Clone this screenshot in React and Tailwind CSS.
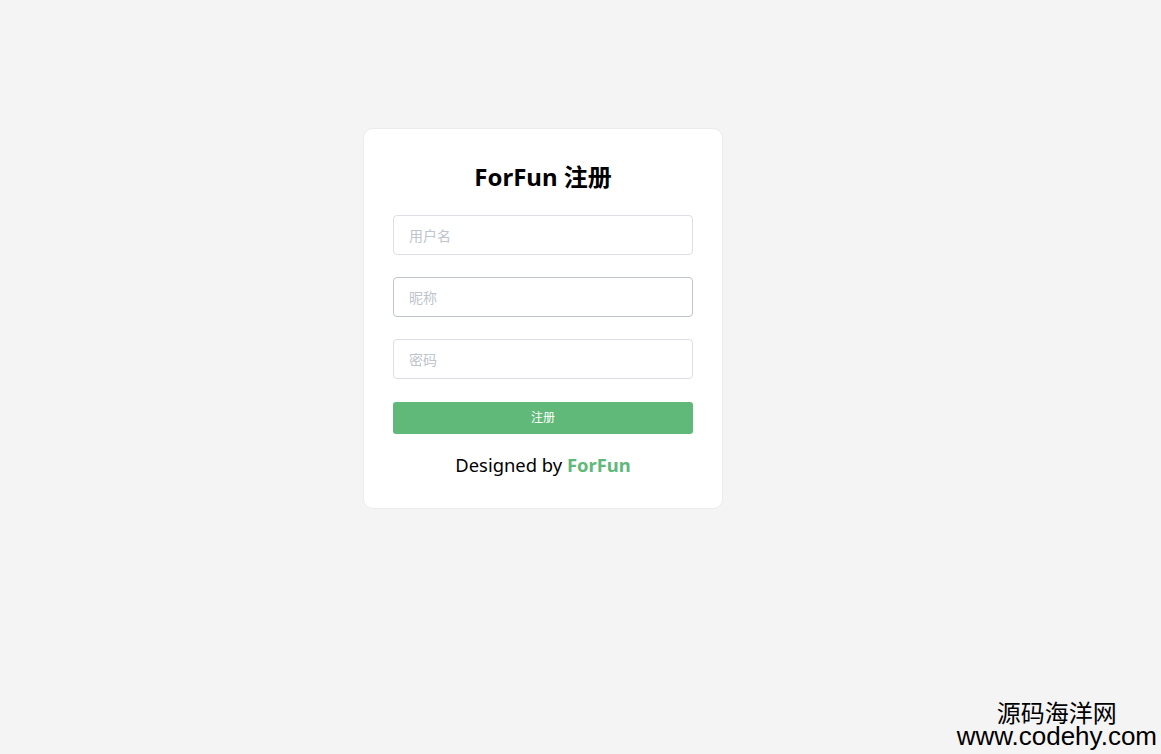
import React from 'react';

const font = { fontFamily: '"Noto Sans", "Noto Sans CJK SC", sans-serif' };

const Field = ({ placeholder, hovered }) => (
  <input
    type="text"
    placeholder={placeholder}
    className={`w-full h-10 rounded-[4px] border bg-white px-[15px] text-sm text-gray-700 outline-none placeholder:text-[#c0c4cc] ${
      hovered ? 'border-[#c0c4cc]' : 'border-[#dcdfe6]'
    }`}
  />
);

export default function App() {
  return (
    <div
      className="relative min-h-[754px] w-full bg-[#f4f4f4] pt-[128px] pl-[363px]"
      style={font}
    >
      <div className="w-[360px] rounded-[10px] border border-[#ececec] bg-white px-[29px] pt-[31px] pb-[31px]">
        <h1 className="text-center text-2xl leading-[34px] font-bold text-black mb-[21px]">
          ForFun 注册
        </h1>
        <div className="flex flex-col gap-[22px]">
          <Field placeholder="用户名" />
          <Field placeholder="昵称" hovered />
          <Field placeholder="密码" />
        </div>
        <button className="mt-[23px] h-8 w-full rounded-[3px] bg-[#60b978] text-xs text-white">
          注册
        </button>
        <p className="mt-[19px] text-center text-[18.4px] leading-6 text-black">
          Designed by <span className="font-bold text-[#60b978]">ForFun</span>
        </p>
      </div>

      <div className="absolute right-[4px] bottom-[6px] flex flex-col items-center leading-none text-black">
        <span
          className="text-[24px] leading-[24px]"
          style={{ fontFamily: '"Noto Sans CJK SC", sans-serif' }}
        >
          源码海洋网
        </span>
        <span
          className="text-[26px] leading-[24px]"
          style={{ fontFamily: '"Liberation Sans", Arial, sans-serif' }}
        >
          www.codehy.com
        </span>
      </div>
    </div>
  );
}
